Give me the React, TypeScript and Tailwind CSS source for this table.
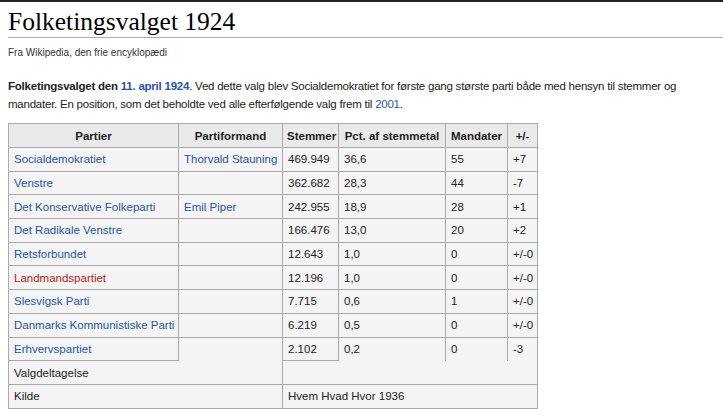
const rows = [
  { party: "Socialdemokratiet", leader: "Thorvald Stauning", votes: "469.949", pct: "36,6", seats: "55", diff: "+7" },
  { party: "Venstre", leader: "", votes: "362.682", pct: "28,3", seats: "44", diff: "-7" },
  { party: "Det Konservative Folkeparti", leader: "Emil Piper", votes: "242.955", pct: "18,9", seats: "28", diff: "+1" },
  { party: "Det Radikale Venstre", leader: "", votes: "166.476", pct: "13,0", seats: "20", diff: "+2" },
  { party: "Retsforbundet", leader: "", votes: "12.643", pct: "1,0", seats: "0", diff: "+/-0" },
  { party: "Landmandspartiet", leader: "", votes: "12.196", pct: "1,0", seats: "0", diff: "+/-0", red: true },
  { party: "Slesvigsk Parti", leader: "", votes: "7.715", pct: "0,6", seats: "1", diff: "+/-0" },
  { party: "Danmarks Kommunistiske Parti", leader: "", votes: "6.219", pct: "0,5", seats: "0", diff: "+/-0" },
];

const link = "text-[#2a55a0]";
const th = "h-6 whitespace-nowrap border-r border-b border-[#aaa] bg-[#eaeaea] px-[4px] text-center font-bold";
const td = "h-[23.7px] whitespace-nowrap border-r border-b border-[#aaa] px-[5px] text-left align-middle";

export default function App() {
  return (
    <div className="min-h-screen bg-white font-['Liberation_Sans',Arial,sans-serif] text-[#222]">
      <div className="border-t-2 border-[#222]" />
      <div className="pl-2">
        {/* Title */}
        <h1 className="mt-[5px] border-b border-[#aaa] pb-[1px] font-['Liberation_Serif','Times_New_Roman',serif] text-[25.5px] leading-[29px] text-black">
          Folketingsvalget 1924
        </h1>
        <div className="mt-[9px] text-[10px] leading-3 text-[#333]">Fra Wikipedia, den frie encyklopædi</div>

        {/* Lead */}
        <p className="mt-[18px] text-[11.5px] leading-[18px] tracking-[-0.23px] text-[#222]">
          <b>Folketingsvalget den </b>
          <b className={link}>11. april 1924</b>. Ved dette valg blev Socialdemokratiet for første gang største parti både med hensyn til stemmer og
          <br />
          mandater. En position, som det beholdte ved alle efterfølgende valg frem til <span className={link}>2001</span>.
        </p>

        {/* Results table */}
        <table className="mt-[10px] w-[529px] table-fixed border-separate border-spacing-0 border-t border-l border-[#aaa] bg-[#f4f4f4] text-[11.5px] leading-4 text-[#222]">
          <colgroup>
            <col className="w-[170px]" />
            <col className="w-[104px]" />
            <col className="w-[56px]" />
            <col className="w-[107px]" />
            <col className="w-[62px]" />
            <col className="w-[30px]" />
          </colgroup>
          <thead>
            <tr>
              <th className={th}>Partier</th>
              <th className={th}>Partiformand</th>
              <th className={th}>Stemmer</th>
              <th className={th}>Pct. af stemmetal</th>
              <th className={th}>Mandater</th>
              <th className={th}>+/-</th>
            </tr>
          </thead>
          <tbody>
            {rows.map((r) => (
              <tr key={r.party}>
                <td className={`${td} ${r.red ? "text-[#b21c1c]" : link}`}>{r.party}</td>
                <td className={`${td} ${link}`}>{r.leader}</td>
                <td className={td}>{r.votes}</td>
                <td className={td}>{r.pct}</td>
                <td className={td}>{r.seats}</td>
                <td className={td}>{r.diff}</td>
              </tr>
            ))}
            <tr>
              <td className={`${td} ${link}`}>Erhvervspartiet</td>
              <td className="h-[23.7px] border-r border-[#aaa]" />
              <td className={td}>2.102</td>
              <td className="h-[23.7px] border-r border-[#aaa] px-[5px]">0,2</td>
              <td className="h-[23.7px] border-r border-[#aaa] px-[5px]">0</td>
              <td className="h-[23.7px] border-r border-[#aaa] px-[5px]">-3</td>
            </tr>
            <tr>
              <td colSpan={2} className={td}>Valgdeltagelse</td>
              <td colSpan={4} className={td} />
            </tr>
            <tr>
              <td colSpan={2} className={td}>Kilde</td>
              <td colSpan={4} className={td}>Hvem Hvad Hvor 1936</td>
            </tr>
          </tbody>
        </table>
      </div>
    </div>
  );
}
